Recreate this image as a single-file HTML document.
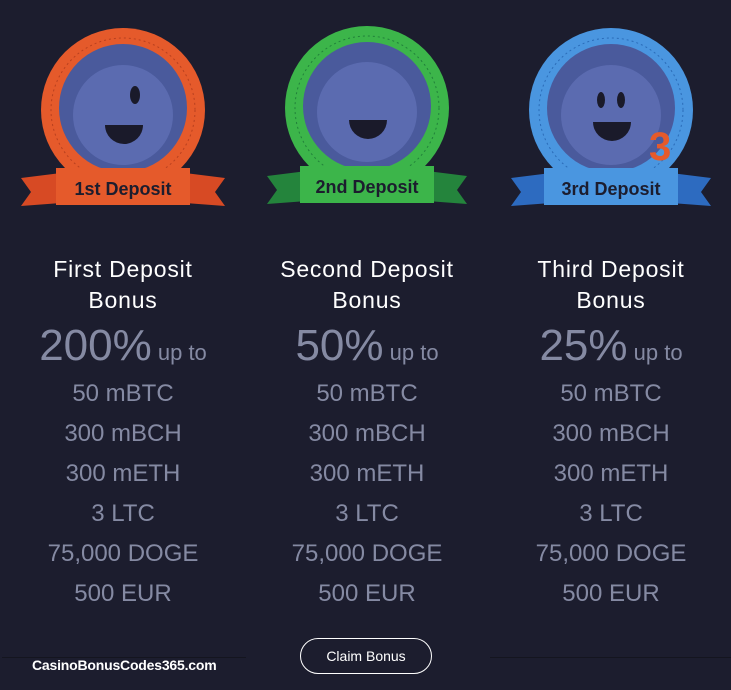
<!DOCTYPE html><html><head><meta charset="utf-8"><style>
body{margin:0;width:731px;height:690px;background:#1c1d2e;font-family:"Liberation Sans",sans-serif;overflow:hidden;position:relative}
.col{position:absolute;top:0;width:244px;text-align:center}
.t{position:absolute;top:254px;width:100%;color:#fff;font-size:23px;line-height:31px;letter-spacing:.8px}
.p{position:absolute;top:321px;width:100%;color:#858aa3;font-size:44px;line-height:50px}
.p span{font-size:22px}
.l{position:absolute;width:100%;color:#858aa3;font-size:24px;line-height:30px}
svg{position:absolute;left:0;top:0}
</style></head><body>
<div class="col" style="left:1px">
<svg width="244" height="230"><circle cx="122" cy="110" r="82" fill="#e55a2b"/><circle cx="122" cy="110" r="72" fill="none" stroke="#b8401f" stroke-dasharray="2 3"/><circle cx="122" cy="108" r="64" fill="#4a5a9c"/><circle cx="122" cy="115" r="50" fill="#5b6bb0"/><ellipse cx="134" cy="95" rx="5" ry="9" fill="#1a1a2a"/><path d="M104 125h38a19 19 0 0 1-38 0z" fill="#1a1a2a"/><path d="M20 178l40-5v30l-40 3 10-14z M224 178l-40-5v30l40 3-10-14z" fill="#d74a24"/><rect x="55" y="168" width="134" height="37" fill="#e55a2b"/><text x="122" y="195" text-anchor="middle" font-size="18" font-weight="bold" fill="#1c1d2e">1st Deposit</text></svg>
<div class="t">First Deposit<br>Bonus</div>
<div class="p">200%<span> up to</span></div>
<div class="l" style="top:379px">50 mBTC</div><div class="l" style="top:419px">300 mBCH</div><div class="l" style="top:459px">300 mETH</div><div class="l" style="top:499px">3 LTC</div><div class="l" style="top:539px">75,000 DOGE</div><div class="l" style="top:579px">500 EUR</div>
</div>
<div class="col" style="left:245px">
<svg width="244" height="230"><circle cx="122" cy="108" r="82" fill="#3cb54a"/><circle cx="122" cy="108" r="72" fill="none" stroke="#21803a" stroke-dasharray="2 3"/><circle cx="122" cy="106" r="64" fill="#4a5a9c"/><circle cx="122" cy="112" r="50" fill="#5b6bb0"/><path d="M104 120h38a19 19 0 0 1-38 0z" fill="#1a1a2a"/><path d="M22 176l40-5v30l-40 3 10-14z M222 176l-40-5v30l40 3-10-14z" fill="#24843c"/><rect x="55" y="166" width="134" height="37" fill="#3cb54a"/><text x="122" y="193" text-anchor="middle" font-size="18" font-weight="bold" fill="#1c1d2e">2nd Deposit</text></svg>
<div class="t">Second Deposit<br>Bonus</div>
<div class="p">50%<span> up to</span></div>
<div class="l" style="top:379px">50 mBTC</div><div class="l" style="top:419px">300 mBCH</div><div class="l" style="top:459px">300 mETH</div><div class="l" style="top:499px">3 LTC</div><div class="l" style="top:539px">75,000 DOGE</div><div class="l" style="top:579px">500 EUR</div>
</div>
<div class="col" style="left:489px">
<svg width="244" height="230"><circle cx="122" cy="110" r="82" fill="#4a96e0"/><circle cx="122" cy="110" r="72" fill="none" stroke="#2b6cb8" stroke-dasharray="2 3"/><circle cx="122" cy="108" r="64" fill="#4a5a9c"/><circle cx="122" cy="115" r="50" fill="#5b6bb0"/><ellipse cx="112" cy="100" rx="4" ry="8" fill="#1a1a2a"/><ellipse cx="132" cy="100" rx="4" ry="8" fill="#1a1a2a"/><path d="M104 122h38a19 19 0 0 1-38 0z" fill="#1a1a2a"/><text x="160" y="160" font-size="40" font-weight="bold" fill="#e55a2b">3</text><path d="M22 178l40-5v30l-40 3 10-14z M222 178l-40-5v30l40 3-10-14z" fill="#2d6bc0"/><rect x="55" y="168" width="134" height="37" fill="#4a96e0"/><text x="122" y="195" text-anchor="middle" font-size="18" font-weight="bold" fill="#1c1d2e">3rd Deposit</text></svg>
<div class="t">Third Deposit<br>Bonus</div>
<div class="p">25%<span> up to</span></div>
<div class="l" style="top:379px">50 mBTC</div><div class="l" style="top:419px">300 mBCH</div><div class="l" style="top:459px">300 mETH</div><div class="l" style="top:499px">3 LTC</div><div class="l" style="top:539px">75,000 DOGE</div><div class="l" style="top:579px">500 EUR</div>
</div>
<div style="position:absolute;left:2px;top:657px;width:244px;height:1px;background:#14151f"></div>
<div style="position:absolute;left:490px;top:657px;width:241px;height:1px;background:#14151f"></div>
<div style="position:absolute;left:300px;top:638px;width:132px;height:36px;border:1px solid #fff;border-radius:19px;box-sizing:border-box;color:#fff;font-size:14px;line-height:34px;text-align:center">Claim Bonus</div>
<div style="position:absolute;left:32px;top:657px;color:#fff;font-size:14px;font-weight:bold;letter-spacing:-.2px">CasinoBonusCodes365.com</div>
</body></html>
